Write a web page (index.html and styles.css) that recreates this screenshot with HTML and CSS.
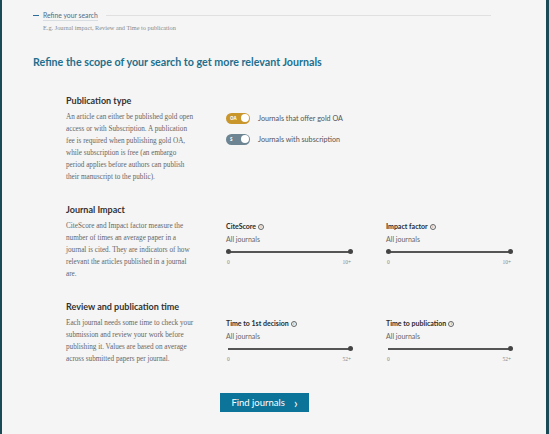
FILE: index.html
```html
<!DOCTYPE html>
<html lang="en">
<head>
    <meta charset="UTF-8">
    <meta name="viewport" content="width=device-width, initial-scale=1.0">
    <title>Refine your search</title>
    <link rel="stylesheet" href="styles.css">
</head>
<body>

<div class="page">
    <div class="refine-bar">
        <span class="refine-dash"></span>
        <span class="refine-link">Refine your search</span>
        <span class="refine-rule"></span>
    </div>
    <div class="refine-hint">E.g. Journal impact, Review and Time to publication</div>

    <h2 class="title">Refine the scope of your search to get more relevant Journals</h2>

    <div class="group">
        <h3 class="group-title">Publication type</h3>
        <p class="group-text">An article can either be published gold open<br>access or with Subscription. A publication<br>fee is required when publishing gold OA,<br>while subscription is free (an embargo<br>period applies before authors can publish<br>their manuscript to the public).</p>
        <div class="toggles">
            <div class="toggle-row">
                <span class="toggle gold"><span class="toggle-tag">OA</span><span class="toggle-knob"></span></span>
                <span class="toggle-label">Journals that offer gold OA</span>
            </div>
            <div class="toggle-row">
                <span class="toggle slate"><span class="toggle-tag">S</span><span class="toggle-knob"></span></span>
                <span class="toggle-label">Journals with subscription</span>
            </div>
        </div>
    </div>

    <div class="group">
        <h3 class="group-title">Journal Impact</h3>
        <p class="group-text">CiteScore and Impact factor measure the<br>number of times an average paper in a<br>journal is cited. They are indicators of how<br>relevant the articles published in a journal<br>are.</p>
        <div class="sliders">
            <div class="slider">
                <div class="slider-name">CiteScore <span class="info">i</span></div>
                <div class="slider-value">All journals</div>
                <div class="track"><span class="knob"></span><span class="knob"></span></div>
                <div class="scale"><span>0</span><span>10+</span></div>
            </div>
            <div class="slider">
                <div class="slider-name">Impact factor <span class="info">i</span></div>
                <div class="slider-value">All journals</div>
                <div class="track"><span class="knob"></span><span class="knob"></span></div>
                <div class="scale"><span>0</span><span>10+</span></div>
            </div>
        </div>
    </div>

    <div class="group">
        <h3 class="group-title">Review and publication time</h3>
        <p class="group-text">Each journal needs some time to check your<br>submission and review your work before<br>publishing it. Values are based on average<br>across submitted papers per journal.</p>
        <div class="sliders">
            <div class="slider">
                <div class="slider-name">Time to 1st decision <span class="info">i</span></div>
                <div class="slider-value">All journals</div>
                <div class="track"><span class="knob hidden"></span><span class="knob"></span></div>
                <div class="scale"><span>0</span><span>52+</span></div>
            </div>
            <div class="slider">
                <div class="slider-name">Time to publication <span class="info">i</span></div>
                <div class="slider-value">All journals</div>
                <div class="track"><span class="knob hidden"></span><span class="knob"></span></div>
                <div class="scale"><span>0</span><span>52+</span></div>
            </div>
        </div>
    </div>

    <div class="actions">
        <button class="find-btn">Find journals <span class="chev">&#8250;</span></button>
    </div>
</div>

</body>
</html>
```

FILE: styles.css
```css
html, body {
    margin: 0;
    padding: 0;
}

body {
    background-color: #f5f5f5;
    font-family: 'Open Sans', sans-serif;
    color: #333;
}

.page {
    box-sizing: border-box;
    width: 549px;
    height: 434px;
    border-left: 2px solid #1b4a57;
    border-right: 3px solid #1b4a57;
    padding: 9px 55px 0 31px;
    overflow: hidden;
}

.refine-bar {
    display: flex;
    align-items: center;
    height: 12px;
}

.refine-dash {
    width: 6px;
    height: 1px;
    background-color: #2c6c9a;
    margin-right: 4px;
}

.refine-link {
    font-family: 'Lato', sans-serif;
    font-size: 6.8px;
    color: #4f6d88;
    border-bottom: 1px solid #d8dde2;
    line-height: 10px;
}

.refine-rule {
    flex: 1;
    height: 1px;
    background-color: #e0e0e0;
    margin-left: 8px;
}

.refine-hint {
    font-family: 'Liberation Serif', serif;
    font-size: 6.3px;
    line-height: 8px;
    color: #8a8a8a;
    margin: 3px 0 0 10px;
}

.title {
    font-family: 'Lato', sans-serif;
    font-size: 10.7px;
    font-weight: bold;
    color: #1e6f8d;
    margin: 23px 0 0;
    line-height: 14px;
}

.group {
    display: grid;
    grid-template-columns: 133px 1fr;
    column-gap: 27px;
    padding-left: 33px;
    margin-bottom: 21px;
}

.title + .group {
    margin-top: 26px;
}

.group-title {
    grid-column: 1 / 3;
    font-family: 'Lato', sans-serif;
    font-size: 9px;
    font-weight: bold;
    color: #333;
    margin: 0 0 4px;
    line-height: 12px;
}

.group-text {
    font-family: 'Liberation Serif', serif;
    font-size: 7.2px;
    line-height: 12px;
    color: #666;
    margin: 0;
    white-space: nowrap;
}

.toggles {
    display: flex;
    flex-direction: column;
    gap: 10px;
    padding-top: 1.5px;
}

.toggle-row {
    display: flex;
    align-items: center;
    gap: 8px;
}

.toggle {
    display: flex;
    align-items: center;
    justify-content: space-between;
    box-sizing: border-box;
    width: 24px;
    height: 11px;
    border-radius: 6px;
    padding: 0 1.5px 0 4px;
}

.toggle.gold {
    background-color: #c9962c;
}

.toggle.slate {
    background-color: #6d8593;
}

.toggle-tag {
    font-size: 4.5px;
    font-weight: bold;
    color: #fff;
}

.toggle-knob {
    width: 8px;
    height: 8px;
    border-radius: 50%;
    background-color: #fff;
}

.toggle-label {
    font-family: 'Lato', sans-serif;
    font-size: 7.2px;
    color: #555;
}

.sliders {
    display: grid;
    grid-template-columns: 125px 125px;
    column-gap: 35px;
}

.slider-name {
    font-family: 'Lato', sans-serif;
    font-size: 7px;
    font-weight: bold;
    color: #2b2b2b;
    line-height: 13px;
    display: flex;
    align-items: center;
    gap: 2px;
}

.info {
    display: inline-flex;
    align-items: center;
    justify-content: center;
    box-sizing: border-box;
    width: 6px;
    height: 6px;
    border: 0.7px solid #666;
    border-radius: 50%;
    font-size: 4px;
    font-weight: normal;
    color: #555;
}

.slider-value {
    font-family: 'Lato', sans-serif;
    font-size: 7px;
    color: #666;
    line-height: 13px;
}

.track {
    display: flex;
    justify-content: space-between;
    align-items: center;
    height: 2px;
    background-color: #555;
    margin: 4.5px 0 0 2px;
}

.knob {
    width: 5px;
    height: 5px;
    border-radius: 50%;
    background-color: #444;
    margin: 0 -2px;
}

.knob.hidden {
    visibility: hidden;
}

.scale {
    display: flex;
    justify-content: space-between;
    font-family: 'Liberation Serif', serif;
    font-size: 5.5px;
    line-height: 7px;
    color: #888;
    margin-top: 6px;
    padding-left: 1px;
}

.actions {
    display: flex;
    justify-content: center;
    margin-top: 28px;
    padding-left: 5px;
}

.find-btn {
    font-family: 'Lato', sans-serif;
    font-size: 9.5px;
    color: #fff;
    background-color: #0c7399;
    border: none;
    width: 89px;
    height: 19px;
    padding: 0;
    display: flex;
    align-items: center;
    justify-content: center;
    gap: 9px;
}

.chev {
    font-size: 13px;
    line-height: 8px;
}
```
